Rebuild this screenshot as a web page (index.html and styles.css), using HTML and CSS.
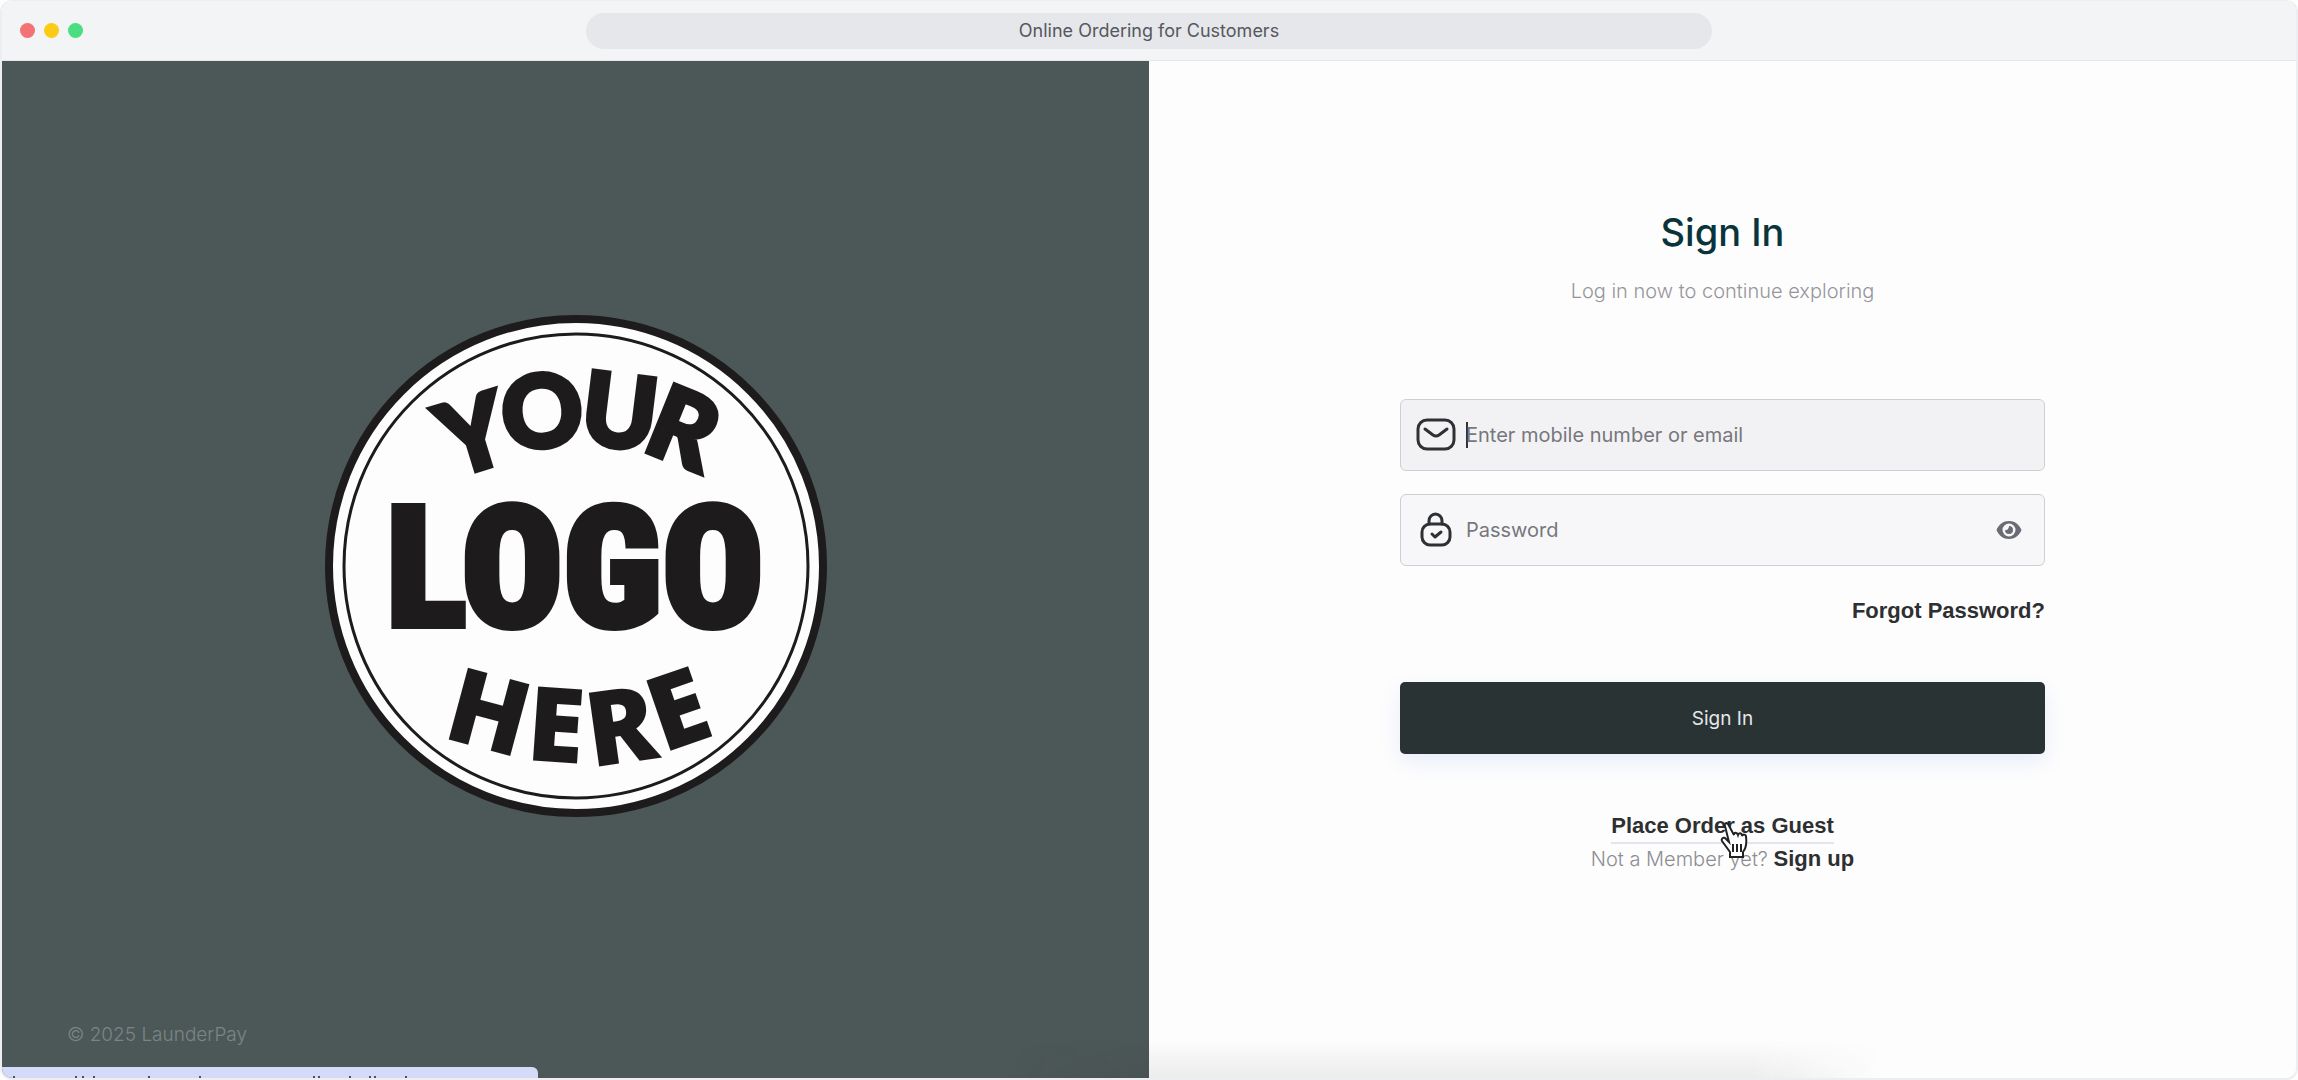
FILE: index.html
```html
<!DOCTYPE html>
<html lang="en">
<head>
<meta charset="utf-8">
<title>Online Ordering for Customers</title>
<link rel="stylesheet" href="styles.css">
</head>
<body>
<div class="window">
  <header class="titlebar">
    <div class="lights">
      <span class="light light-red"></span>
      <span class="light light-yellow"></span>
      <span class="light light-green"></span>
    </div>
    <div class="address">Online Ordering for Customers</div>
  </header>
  <div class="content">
    <aside class="brand">
      <svg class="logo" viewBox="0 0 502 502" role="img" aria-label="Your logo here">
        <circle cx="251" cy="251" r="247" fill="#fdfdfd" stroke="#1d1b1c" stroke-width="8"/>
        <circle cx="251" cy="251" r="232" fill="none" stroke="#1d1b1c" stroke-width="3"/>
        <g class="arc-top">
          <text transform="translate(148 119) rotate(-17)" y="36">Y</text>
          <text transform="translate(217 96) rotate(-4)" y="36">O</text>
          <text transform="translate(295 96) rotate(7)" y="36">U</text>
          <text transform="translate(359 113) rotate(22)" y="36">R</text>
        </g>
        <text class="logo-word" x="250" y="311">LOGO</text>
        <g class="arc-bottom">
          <text transform="translate(164 397) rotate(15)" y="37">H</text>
          <text transform="translate(231 410) rotate(4)" y="37">E</text>
          <text transform="translate(296 411) rotate(-8)" y="37">R</text>
          <text transform="translate(353 394) rotate(-19)" y="37">E</text>
        </g>
      </svg>
      <p class="copyright">© 2025 LaunderPay</p>
    </aside>
    <main class="panel">
      <form class="signin">
        <h1 class="heading">Sign In</h1>
        <p class="subtitle">Log in now to continue exploring</p>
        <div class="field field-focus">
          <svg class="field-icon" viewBox="0 0 40 40" aria-hidden="true"><rect x="2" y="5" width="36" height="29" rx="9"/><path d="M9 14l8 6q3 2 6 0l8-6"/></svg>
          <span class="caret"></span>
          <input class="input" type="text" aria-label="Mobile number or email" placeholder="Enter mobile number or email">
        </div>
        <div class="field">
          <svg class="field-icon" viewBox="0 0 40 40" aria-hidden="true"><rect x="6" y="14" width="28" height="21" rx="8"/><path d="M13 14v-3a6.500 7 0 0 1 13 0v3"/><path d="M16 24l3 3 6-5"/></svg>
          <input class="input" type="password" aria-label="Password" placeholder="Password">
          <button class="reveal" type="button" aria-label="Show password">
            <svg viewBox="0 0 26 18" aria-hidden="true"><path fill-rule="evenodd" d="M13 0C6 0 2 5 .5 9 2 13 6 18 13 18s11-5 12.500-9C24 5 20 0 13 0zm0 2.500a6.500 6.500 0 1 1 0 13 6.500 6.500 0 0 1 0-13z"/><path d="M13 5a4 4 0 1 1-4 4q2 .5 3-1t1-3z"/></svg>
          </button>
        </div>
        <a class="link forgot" href="#">Forgot Password?</a>
        <button class="submit" type="submit">Sign In</button>
        <a class="link guest" href="#">Place Order as Guest
          <svg class="pointer" viewBox="0 0 28 38" aria-hidden="true"><path d="M8 3c-2-2-4 0-3 2l4 16-4-4c-2-1-4 1-3 3l8 11v5h13v-5c3-4 4-8 3-15 0-3-3-3-4-1 0-3-3-4-4-1-1-3-4-3-4 0z"/><path d="M13 23v8M17 23v8M21 23v8"/></svg>
        </a>
        <p class="member">Not a Member yet? <a class="link" href="#">Sign up</a></p>
      </form>
    </main>
    <div class="shade"></div>
    <div class="status">
      <svg viewBox="0 0 536 11" aria-hidden="true"><path d="M11 10h2M73 10h2M80 10h2M91 10h2M146 10h2M197 10h2M311 10h2M316 10h2M347 10h2M367 10h2M372 10h2M403 10h2"/></svg>
    </div>
  </div>
</div>
</body>
</html>
```
FILE: styles.css
```css
* { box-sizing: border-box; }
body {
  margin: 0;
  background: #fdfdfd;
  font-family: Inter, "Liberation Sans", sans-serif;
  font-size: 20px;
}
h1, p { margin: 0; }
.window {
  display: flex;
  flex-direction: column;
  height: 100vh;
  border: 2px solid #eceef1;
  border-top-width: 1px;
  border-radius: 12px;
  overflow: hidden;
}
.titlebar {
  display: grid;
  grid-template-columns: 1fr 49vw 1fr;
  align-items: center;
  height: 60px;
  flex: none;
  padding: 0 18px;
  background: #f3f4f6;
  border-bottom: 1px solid #e5e7eb;
}
.lights { display: flex; gap: 9px; }
.light { width: 15px; height: 15px; border-radius: 50%; }
.light-red { background: #f47174; }
.light-yellow { background: #facc15; }
.light-green { background: #4ade80; }
.address {
  height: 36px;
  border-radius: 18px;
  background: #e5e7eb;
  color: #55585d;
  font-size: 18px;
  line-height: 36px;
  text-align: center;
}
.content {
  position: relative;
  display: grid;
  grid-template-columns: 1fr 1fr;
  flex: 1;
}
.brand {
  display: grid;
  grid-template-rows: 1fr auto 1fr;
  justify-items: center;
  background: #4c5757;
}
.logo { grid-row: 2; width: 502px; height: 502px; margin-bottom: 8px; }
.logo text { fill: #1d1b1c; stroke: #1d1b1c; text-anchor: middle; }
.arc-top { font: 900 100px Lato, sans-serif; stroke-width: 5px; }
.arc-bottom { font: 900 104px "Noto Sans", sans-serif; stroke-width: 0; }
.logo-word {
  font: 900 168px "Roboto Condensed", "Open Sans Condensed", "DejaVu Sans Condensed", sans-serif;
  stroke-width: 6px;
}
.copyright {
  grid-row: 3;
  align-self: end;
  justify-self: start;
  padding: 0 0 27px 65px;
  color: #7a8585;
  font-size: 19px;
  font-weight: 300;
  line-height: 32px;
}
.panel { display: flex; justify-content: center; background: #fdfdfd; }
.signin {
  display: flex;
  flex-direction: column;
  align-items: center;
  width: 645px;
  padding-top: 145px;
}
.heading { color: #0a343c; font-size: 38px; font-weight: 500; line-height: 52px; }
.subtitle { margin: 17px 0 92px; color: #96969a; font-weight: 300; line-height: 32px; }
.field {
  display: flex;
  align-items: center;
  align-self: stretch;
  height: 72px;
  margin-bottom: 23px;
  padding: 0 20px 0 15px;
  border: 1px solid #cbd0d3;
  border-radius: 6px;
  background: #f7f7f9;
}
.field-focus { background: #f2f2f5; }
.field-icon { width: 40px; height: 40px; fill: none; stroke: #2e3033; stroke-width: 3; stroke-linecap: round; stroke-linejoin: round; }
.caret { width: 2px; height: 26px; margin: 0 -2px 0 10px; background: #333; }
.input {
  flex: 1;
  min-width: 0;
  padding: 0 0 0 10px;
  border: 0;
  outline: 0;
  background: none;
  font: 400 20px Inter, sans-serif;
}
.caret + .input { padding-left: 0; }
.input::placeholder { color: #77777c; opacity: 1; }
.reveal { width: 28px; height: 20px; padding: 0; border: 0; background: none; }
.reveal svg { display: block; width: 26px; height: 18px; fill: #6b6b76; }
.link { color: #2d2f31; font: 700 22px "Liberation Sans", sans-serif; line-height: 32px; text-decoration: none; }
.forgot { align-self: flex-end; margin-top: 6px; }
.submit {
  align-self: stretch;
  height: 72px;
  margin: 55px 0 56px;
  border: 0;
  border-radius: 5px;
  background: #293334;
  box-shadow: 0 8px 20px rgba(80, 120, 220, .12);
  color: #e4e8e8;
  font: 400 19px Inter, sans-serif;
}
.guest { position: relative; border-bottom: 2px solid #e4e4ee; }
.pointer { position: absolute; left: 109px; top: 11px; width: 28px; height: 38px; fill: #fff; stroke: #222; stroke-width: 2; }
.member { color: #8d8d93; font-weight: 300; line-height: 30px; }
.member .link { line-height: 30px; }
.shade {
  position: absolute;
  bottom: 0;
  left: 44%;
  width: 38%;
  height: 38px;
  background: linear-gradient(to top, rgba(40, 40, 50, .08), rgba(40, 40, 50, .03) 65%, transparent);
  -webkit-mask-image: linear-gradient(to right, transparent, #000 15%, #000 85%, transparent);
  mask-image: linear-gradient(to right, transparent, #000 15%, #000 85%, transparent);
}
.status {
  position: absolute;
  left: 0;
  bottom: 0;
  width: 536px;
  height: 11px;
  border-radius: 0 6px 0 0;
  background: #d3dbf8;
}
.status svg { display: block; width: 536px; height: 11px; stroke: #4a5170; stroke-width: 2; }
```
